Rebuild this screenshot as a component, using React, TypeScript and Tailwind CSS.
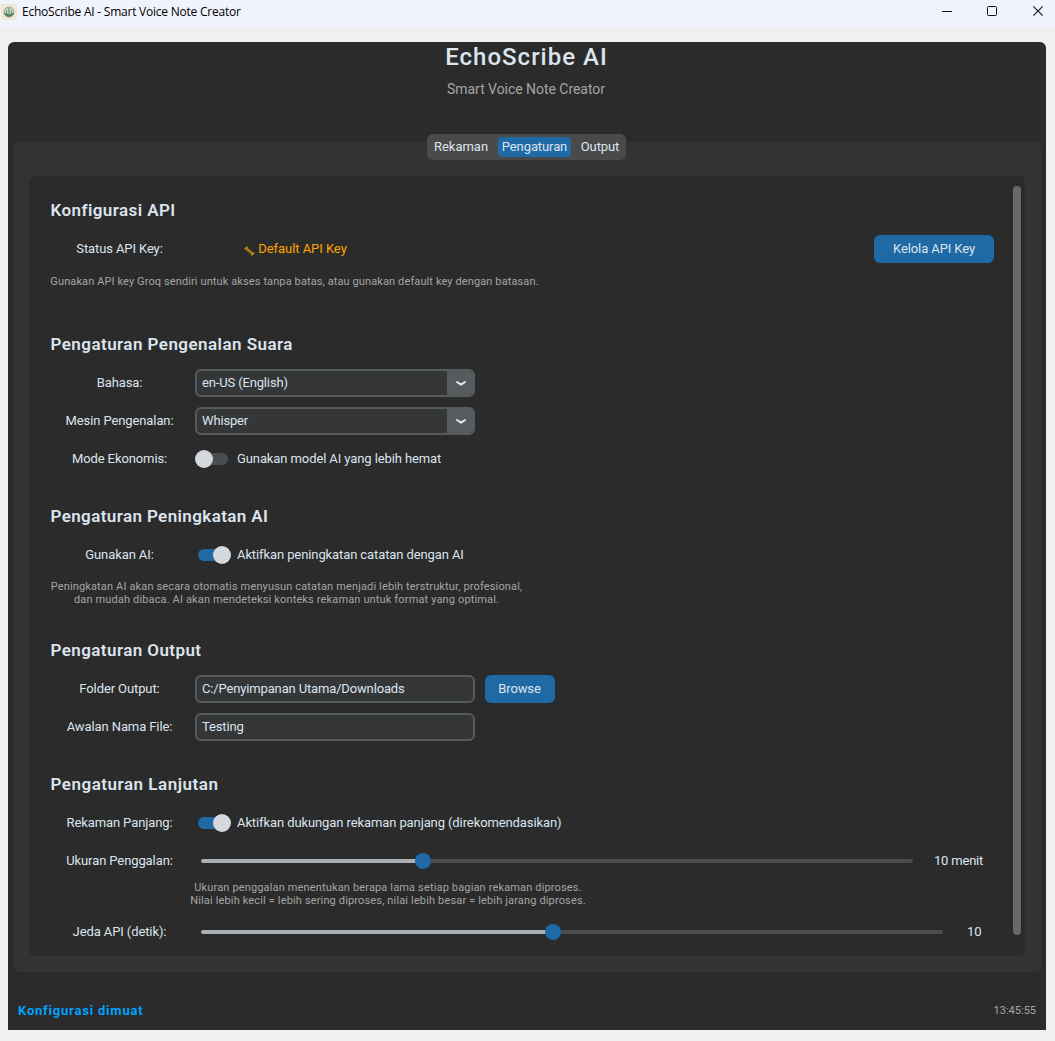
import type { ReactNode } from "react";

function Heading({ children, className = "tracking-[0.45px]" }: { children: ReactNode; className?: string }) {
  return (
    <h2 className={"mb-[11px] h-7 pl-[0.5px] text-[17px] leading-7 font-semibold whitespace-nowrap " + className}>
      {children}
    </h2>
  );
}

function Row({ label, children }: { label: string; children: ReactNode }) {
  return (
    <div className="flex h-7 items-center">
      <div className="mr-[5px] w-[140px] shrink-0 pr-px text-center whitespace-nowrap">{label}</div>
      {children}
    </div>
  );
}

function Field({ value, dropdown = false }: { value: string; dropdown?: boolean }) {
  return (
    <div className="flex h-7 w-[280px] overflow-hidden rounded-md border-2 border-[#565b5e] bg-[#343638]">
      <span className="flex-1 pl-[5px] leading-6 tracking-[-0.15px]">{value}</span>
      {dropdown && (
        <span className="flex w-[26px] items-center justify-center bg-[#565b5e] pl-0.5">
          <svg width="12" height="8" viewBox="0 0 12 8" fill="none">
            <path d="M2 3 6 5.700 10 3" stroke="#dce4ee" strokeWidth="2.100" strokeLinecap="round" strokeLinejoin="round" />
          </svg>
        </span>
      )}
    </div>
  );
}

function Toggle({ on = false, text }: { on?: boolean; text: string }) {
  return (
    <div className="flex items-center">
      {on ? (
        <span className="ml-[3px] flex h-3 w-[33px] items-center justify-end rounded-full bg-gradient-to-r from-[#1f6aa5] from-60% to-transparent to-60%">
          <span className="size-[18px] shrink-0 rounded-full bg-[#d5d9de]" />
        </span>
      ) : (
        <span className="mr-[3px] flex h-3 w-[33px] items-center rounded-full bg-gradient-to-r from-transparent from-40% to-[#4a4d50] to-40%">
          <span className="size-[18px] shrink-0 rounded-full bg-[#d5d9de]" />
        </span>
      )}
      <span className="ml-1.5 whitespace-nowrap">{text}</span>
    </div>
  );
}

function Slider({ before, after }: { before: string; after: string }) {
  return (
    <div className="ml-1.5 flex items-center">
      <span className={"h-1 rounded-l-sm bg-[#aab0b5] " + before} />
      <span className="z-10 -mx-2 size-4 rounded-full bg-[#1f6aa5]" />
      <span className={"h-1 rounded-r-sm bg-[#4a4d50] " + after} />
    </div>
  );
}

function Note({ children, className }: { children: ReactNode; className: string }) {
  return (
    <p className={"text-center text-[11px] leading-[13px] whitespace-nowrap text-[#a5a5a5] " + className}>
      {children}
    </p>
  );
}

function AppIcon() {
  return (
    <svg className="mr-[5px] ml-px" width="16" height="16" viewBox="0 0 16 16">
      <rect width="16" height="16" fill="#f0e9d8" />
      <circle cx="8" cy="8" r="5" fill="#c9d3c0" stroke="#8fa893" strokeWidth="1" />
      <path d="M8 4v7M5.500 6.500v2M10.500 6.500v2M3.500 9.300c1.500 0 3 .7 4.500 2.200 1.500-1.500 3-2.200 4.500-2.200-.8 2-2.500 3-4.500 3s-3.700-1-4.500-3Z" fill="#4a7d58" stroke="#4a7d58" strokeWidth=".9" />
    </svg>
  );
}

function KeyIcon() {
  return (
    <svg className="mt-1 mr-[3px]" width="11" height="10" viewBox="0 0 11 10" fill="none" stroke="#d08a1c" strokeLinecap="round">
      <path d="M2.800 2.800 8.300 7.700" strokeWidth="2.400" />
      <path d="M1.300 2.800 3 1M7.700 8.800 9.700 7" strokeWidth="1.600" />
      <path d="M2.800 2.800 8 7.400" stroke="#5c4017" strokeWidth=".6" />
    </svg>
  );
}

export default function App() {
  return (
    <div className="flex h-[1041px] w-[1055px] flex-col overflow-hidden bg-[#f0f0f0] font-['Roboto',sans-serif] text-[13px] tracking-[-0.1px] text-[#dce4ee]">
      <header className="flex h-[27px] shrink-0 bg-[#f0f3fb] text-black">
        <div className="flex h-[23px] flex-1 items-center">
          <AppIcon />
          <span className="font-['Open_Sans',sans-serif] text-[12px] tracking-[-0.23px]">EchoScribe AI - Smart Voice Note Creator</span>
        </div>
        <svg width="113" height="24" viewBox="942 0 113 24" fill="none" stroke="#111">
          <path d="M942 11.500h10" />
          <rect x="987.500" y="6.500" width="9" height="9" rx="1" />
          <path d="m1033.300 6.300 9.400 9.400m0-9.400-9.400 9.400" strokeWidth="1.100" />
        </svg>
      </header>

      <main className="mt-[15px] ml-2 flex h-[988px] w-[1038px] flex-col rounded-t-md bg-[#2b2b2b]">
        <div className="h-[92px] pr-px text-center">
          <h1 className="h-[30px] text-[24px] leading-[30px] font-medium tracking-[1px]">EchoScribe AI</h1>
          <p className="mt-[9px] pr-px text-[14px] leading-4 tracking-[-0.04px] text-[#a5a5a5]">Smart Voice Note Creator</p>
        </div>

        <div className="mt-2 ml-[5px] flex h-[830px] w-[1028px] flex-col items-center rounded-md bg-[#333333]">
          <nav className="-mt-2 mr-0.5 flex h-[26px] w-[199px] shrink-0 items-center rounded-md bg-[#4a4a4a] px-[3px] leading-5 tracking-normal">
            <span className="w-[68px] pr-[5px] text-center">Rekaman</span>
            <span className="w-[73px] rounded-sm bg-[#1f6aa5] pl-px text-center tracking-[-0.1px]">Pengaturan</span>
            <span className="w-[52px] pl-[7px] text-center tracking-[-0.1px]">Output</span>
          </nav>

          <div className="mt-4 flex h-[780px] w-[996px] rounded-md bg-[#2b2b2b] pt-5 pl-[21px]">
            <div className="flex w-[963px] flex-col">
              <section className="h-[134px]">
                <Heading className="tracking-[0.42px]">Konfigurasi API</Heading>
                <Row label="Status API Key:">
                  <span className="flex w-[201px] items-center justify-center tracking-[-0.05px] text-[#ffa500]">
                    <KeyIcon />
                    Default API Key
                  </span>
                  <button className="ml-auto mr-[19px] h-7 w-[120px] rounded-md bg-[#1f6aa5]">Kelola API Key</button>
                </Row>
                <Note className="mt-3 w-[489px] tracking-[0.11px]">
                  Gunakan API key Groq sendiri untuk akses tanpa batas, atau gunakan default key dengan batasan.
                </Note>
              </section>

              <section className="h-[172px]">
                <Heading>Pengaturan Pengenalan Suara</Heading>
                <div className="flex flex-col gap-2.5">
                  <Row label="Bahasa:"><Field value="en-US (English)" dropdown /></Row>
                  <Row label="Mesin Pengenalan:"><Field value="Whisper" dropdown /></Row>
                  <Row label="Mode Ekonomis:"><Toggle text="Gunakan model AI yang lebih hemat" /></Row>
                </div>
              </section>

              <section className="h-[134px]">
                <Heading className="tracking-[0.39px]">Pengaturan Peningkatan AI</Heading>
                <Row label="Gunakan AI:"><Toggle on text="Aktifkan peningkatan catatan dengan AI" /></Row>
                <Note className="mt-[11px] w-[473px] tracking-[0.145px]">
                  Peningkatan AI akan secara otomatis menyusun catatan menjadi lebih terstruktur, profesional,
                  <br />
                  dan mudah dibaca. AI akan mendeteksi konteks rekaman untuk format yang optimal.
                </Note>
              </section>

              <section className="h-[134px]">
                <Heading className="tracking-[0.42px]">Pengaturan Output</Heading>
                <div className="flex flex-col gap-2.5">
                  <Row label="Folder Output:">
                    <Field value="C:/Penyimpanan Utama/Downloads" />
                    <button className="ml-2.5 h-7 w-[70px] rounded-md bg-[#1f6aa5] pr-px">Browse</button>
                  </Row>
                  <Row label="Awalan Nama File:"><Field value="Testing" /></Row>
                </div>
              </section>

              <section>
                <Heading className="tracking-[0.52px]">Pengaturan Lanjutan</Heading>
                <div className="flex flex-col gap-2.5">
                  <Row label="Rekaman Panjang:">
                    <Toggle on text="Aktifkan dukungan rekaman panjang (direkomendasikan)" />
                  </Row>
                  <Row label="Ukuran Penggalan:">
                    <Slider before="w-[222px]" after="w-[490px]" />
                    <span className="ml-[21px] tracking-[-0.2px] whitespace-nowrap">10 menit</span>
                  </Row>
                </div>
                <Note className="mt-1.5 mb-[11px] ml-[140px] w-[396px] tracking-[0.15px]">
                  Ukuran penggalan menentukan berapa lama setiap bagian rekaman diproses.
                  <br />
                  Nilai lebih kecil = lebih sering diproses, nilai lebih besar = lebih jarang diproses.
                </Note>
                <Row label="Jeda API (detik):">
                  <Slider before="w-[352px]" after="w-[390px]" />
                  <span className="ml-6">10</span>
                </Row>
              </section>
            </div>
            <div className="-mt-2.5 h-[749px] w-2 rounded-sm bg-[#696969]" />
          </div>
        </div>

        <footer className="flex h-[58px] items-center justify-between px-2.5 pt-[19px]">
          <span className="font-bold tracking-[0.8px] text-[#00a2ff]">Konfigurasi dimuat</span>
          <span className="pt-0.5 text-[11px] tracking-normal text-[#a5a5a5]">13:45:55</span>
        </footer>
      </main>
    </div>
  );
}
